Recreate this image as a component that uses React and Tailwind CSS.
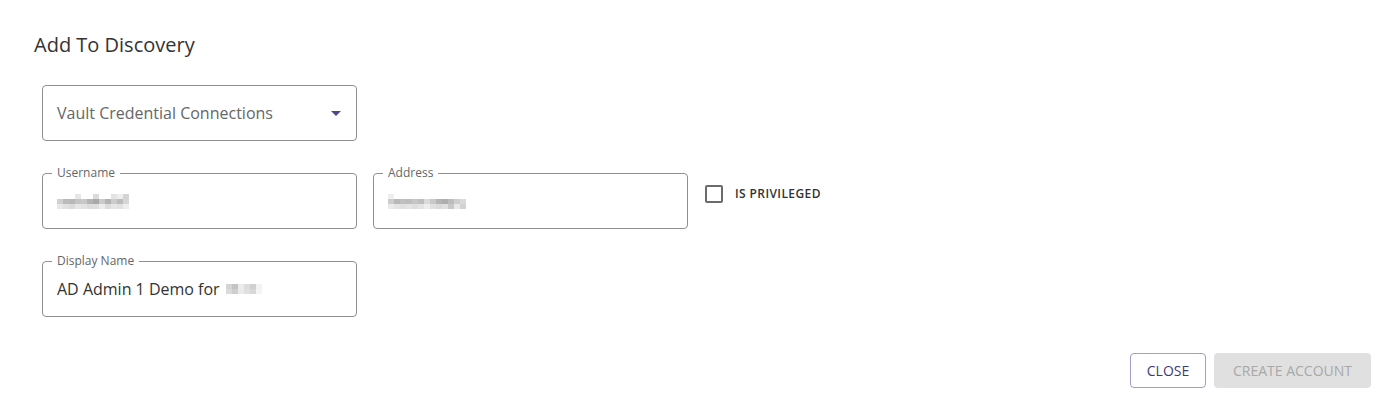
const font = { fontFamily: '"Open Sans", "Noto Sans", sans-serif' };

function Blur({ rows }) {
  return (
    <div className="flex flex-col">
      {rows.map((row, i) => (
        <div key={i} className="flex">
          {row.map((c, j) => (
            <span key={j} className="block w-[6px] h-[5px]" style={{ backgroundColor: c }} />
          ))}
        </div>
      ))}
    </div>
  );
}

const userBlur = [
  ['#fff', '#fff', '#fff', '#e6e6e6', '#fff', '#fff', '#dcdcdc', '#fff', '#fff', '#e4e4e4', '#eeeeee', '#d4d4d4', '#fff'],
  ['#d0d0d0', '#bcbcbc', '#b8b8b8', '#c4c4c4', '#c8c8c8', '#b4b4b4', '#a8a8a8', '#cacaca', '#b2b2b2', '#cccccc', '#bcbcbc', '#d6d6d6', '#fff'],
  ['#e8e8e8', '#e0e0e0', '#dadada', '#e6e6e6', '#e2e2e2', '#dcdcdc', '#dedede', '#ececec', '#dcdcdc', '#e6e6e6', '#e2e2e2', '#eeeeee', '#fff'],
];
const addrBlur = [
  ['#eeeeee', '#fff', '#fff', '#fff', '#fff', '#fff', '#fff', '#fff', '#fff', '#fff', '#fff', '#fff', '#fff', '#fff'],
  ['#cccccc', '#b8b8b8', '#c0c0c0', '#bcbcbc', '#c6c6c6', '#bebebe', '#dadada', '#c8c8c8', '#b4b4b4', '#aeaeae', '#bcbcbc', '#cecece', '#dadada', '#fff'],
  ['#eaeaea', '#e4e4e4', '#e0e0e0', '#e4e4e4', '#dedede', '#e4e4e4', '#eeeeee', '#e0e0e0', '#dadada', '#e0e0e0', '#c8c8c8', '#e8e8e8', '#d2d2d2', '#fff'],
];
const nameBlur = [
  ['#d4d4d4', '#c4c4c4', '#ececec', '#dcdcdc', '#d0d0d0', '#f2f2f2'],
  ['#dadada', '#cecece', '#eaeaea', '#e0e0e0', '#d8d8d8', '#f4f4f4'],
];

function Field({ label, children }) {
  return (
    <div className="relative w-[315px] h-[56px] border border-[#8f8f8f] rounded-[4px] flex items-center px-[14px]">
      <span className="absolute -top-[9px] left-[9px] bg-white px-[5px] text-[12px] leading-[16px] text-[#666]">
        {label}
      </span>
      {children}
    </div>
  );
}

export default function App() {
  return (
    <div className="min-h-screen bg-white text-[#333]" style={font}>
      <div className="pt-[31px] pl-[34px] pr-[21px] pb-[23px]">
        <h2 className="text-[20px] leading-[28px] text-[#333]">Add To Discovery</h2>

        <div className="pl-[8px] mt-[26px] flex flex-col gap-[32px]">
          <div className="w-[315px] h-[56px] border border-[#8f8f8f] rounded-[4px] flex items-center justify-between pl-[14px] pr-[14px]">
            <span className="text-[16px] text-[#666]">Vault Credential Connections</span>
            <svg width="10" height="5" viewBox="0 0 10 5" className="mr-[1px]">
              <path d="M0 0h10L5 5z" fill="#4a478c" />
            </svg>
          </div>

          <div className="flex items-start">
            <Field label="Username">
              <Blur rows={userBlur} />
            </Field>
            <div className="ml-[16px]">
              <Field label="Address">
                <Blur rows={addrBlur} />
              </Field>
            </div>
            <label className="ml-[17px] mt-[12px] flex items-center gap-[12px]">
              <span className="block w-[18px] h-[18px] border-2 border-[#6b6b6b] rounded-[2px]" />
              <span className="text-[12px] font-semibold tracking-[0.4px] text-[#333]">IS PRIVILEGED</span>
            </label>
          </div>

          <Field label="Display Name">
            <span className="text-[16px] text-[#333]">AD Admin 1 Demo for</span>
            <span className="ml-[6px]">
              <Blur rows={nameBlur} />
            </span>
          </Field>
        </div>

        <div className="mt-[36px] flex justify-end gap-[8px]">
          <button className="h-[35px] w-[76px] border border-[#a29ec9] rounded-[4px] text-[14px] text-[#3e3b7c] bg-white">
            CLOSE
          </button>
          <button className="h-[35px] w-[157px] rounded-[4px] bg-[#e0e0e0] text-[14px] text-[#a8a8a8]">
            CREATE ACCOUNT
          </button>
        </div>
      </div>
    </div>
  );
}
